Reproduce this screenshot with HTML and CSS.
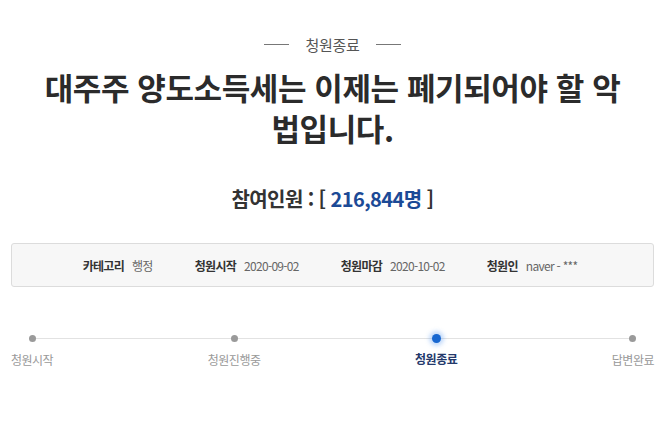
FILE: index.html
```html
<!DOCTYPE html>
<html lang="ko">
<head>
<meta charset="utf-8">
<link rel="stylesheet" href="styles.css">
</head>
<body>
<div class="page">
  <div class="status"><span class="dash"></span><span class="status-text">청원종료</span><span class="dash"></span></div>
  <h1 class="title">대주주 양도소득세는 이제는 폐기되어야 할 악 법입니다.</h1>
  <div class="count">참여인원 : [ <span class="num">216,844명</span> ]</div>
  <div class="info">
    <div class="item"><span class="label">카테고리</span><span class="value">행정</span></div>
    <div class="item"><span class="label">청원시작</span><span class="value">2020-09-02</span></div>
    <div class="item"><span class="label">청원마감</span><span class="value">2020-10-02</span></div>
    <div class="item"><span class="label">청원인</span><span class="value">naver - ***</span></div>
  </div>
  <div class="timeline">
    <div class="track"></div>
    <div class="step"><span class="dot"></span><span class="step-label">청원시작</span></div>
    <div class="step"><span class="dot"></span><span class="step-label">청원진행중</span></div>
    <div class="step active"><span class="dot"></span><span class="step-label">청원종료</span></div>
    <div class="step"><span class="dot"></span><span class="step-label">답변완료</span></div>
  </div>
</div>
</body>
</html>
```
FILE: styles.css
```css
* { box-sizing: border-box; }
html, body { margin: 0; padding: 0; background: #fff; }
body {
  font-family: "Noto Sans CJK KR", "Noto Sans", "Liberation Sans", sans-serif;
  color: #333;
}
.page {
  width: 670px;
  padding: 32px 16px 0 11px;
}
.status {
  display: flex;
  justify-content: center;
  align-items: center;
  gap: 16px;
  height: 24px;
}
.dash {
  width: 25px;
  height: 1px;
  background: #777;
}
.status-text {
  font-size: 15px;
  color: #555;
  letter-spacing: -0.3px;
}
.title {
  margin: 10px auto 0;
  width: 590px;
  text-align: center;
  font-size: 31px;
  line-height: 41px;
  font-weight: 700;
  letter-spacing: -0.4px;
  color: #2b2b2b;
}
.count {
  margin-top: 38px;
  text-align: center;
  font-size: 20px;
  font-weight: 700;
  color: #333;
  letter-spacing: -0.6px;
  line-height: 26px;
}
.num { color: #1c4a96; }
.info {
  margin-top: 31px;
  height: 44px;
  padding-right: 5px;
  border: 1px solid #dcdcdc;
  border-radius: 3px;
  background: #f7f7f7;
  display: flex;
  justify-content: center;
  align-items: center;
  gap: 42px;
  font-size: 12px;
  letter-spacing: -0.7px;
}
.item { display: flex; gap: 8px; align-items: center; }
.label { font-weight: 700; color: #333; }
.value { color: #666; }
.timeline {
  position: relative;
  margin-top: 44px;
  display: flex;
  justify-content: space-between;
}
.track {
  position: absolute;
  left: 21px;
  right: 21px;
  top: 7px;
  height: 1px;
  background: #e2e2e2;
}
.step {
  position: relative;
  display: flex;
  flex-direction: column;
  align-items: center;
  gap: 9px;
}
.dot {
  width: 7px;
  height: 7px;
  margin-top: 4px;
  border-radius: 50%;
  background: #9a9a9a;
}
.step-label {
  font-size: 12px;
  color: #999;
  letter-spacing: -0.5px;
}
.step.active .dot {
  width: 9px;
  height: 9px;
  margin-top: 3px;
  margin-bottom: -2px;
  background: #1767d0;
  box-shadow: 0 0 4px 3px rgba(80, 150, 240, 0.35);
}
.step.active .step-label {
  color: #24396b;
  font-weight: 700;
}
```
